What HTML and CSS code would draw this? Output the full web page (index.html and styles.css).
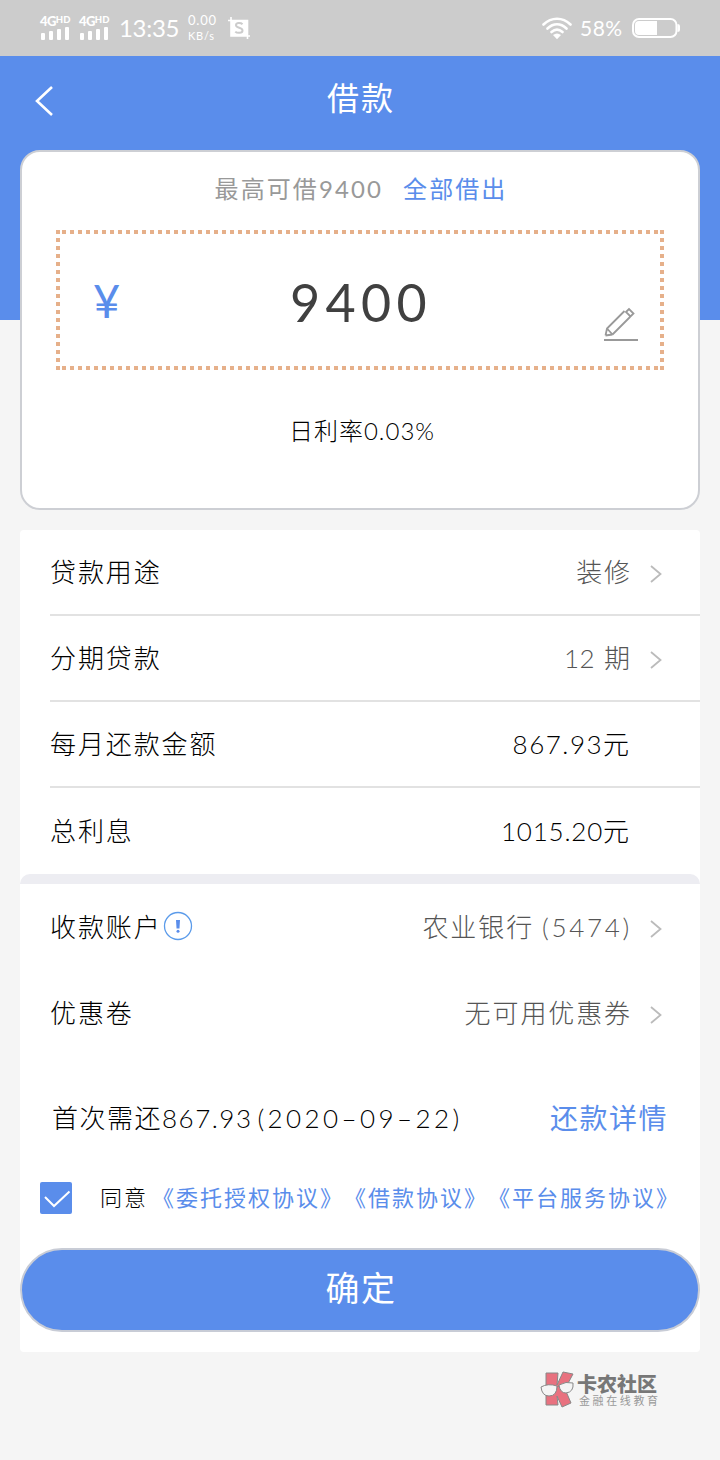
FILE: index.html
```html
<!DOCTYPE html>
<html lang="zh-CN">
<head>
    <meta charset="UTF-8">
    <meta name="viewport" content="width=device-width, initial-scale=1.0">
    <title>借款</title>
    <link rel="stylesheet" href="styles.css">
</head>
<body>
    <div class="status-bar">
        <div class="signal">
            <div class="net">4G<sup>HD</sup></div>
            <svg width="30" height="13" viewBox="0 0 30 13" fill="#fff">
                <rect x="1" y="6" width="4" height="7" rx="1"/><rect x="9" y="4" width="4" height="9" rx="1"/><rect x="17" y="2" width="4" height="11" rx="1"/><rect x="25" y="0" width="4" height="13" rx="1"/>
            </svg>
        </div>
        <div class="signal">
            <div class="net">4G<sup>HD</sup></div>
            <svg width="30" height="13" viewBox="0 0 30 13" fill="#fff">
                <rect x="1" y="6" width="4" height="7" rx="1"/><rect x="9" y="4" width="4" height="9" rx="1"/><rect x="17" y="2" width="4" height="11" rx="1"/><rect x="25" y="0" width="4" height="13" rx="1"/>
            </svg>
        </div>
        <div class="time">13:35</div>
        <div class="speed"><span>0.00</span><span class="unit">KB/s</span></div>
        <svg class="shot" width="22" height="22" viewBox="0 0 22 22">
            <path d="M0 3.5H19.5V22M3 0V19H22" fill="none" stroke="#fff" stroke-width="1.6"/>
            <path d="M3 3H19V19H3Z" fill="#fff"/>
            <path d="M14.5 7.2C13 5.7 8 5.3 8 8.2C8 11.4 14.5 10 14.5 13.4C14.5 16.5 9 16.4 7.3 14.6" fill="none" stroke="#ccc" stroke-width="2"/>
        </svg>
        <div class="status-right">
            <svg width="30" height="23" viewBox="0 0 30 23" fill="none" stroke="#fff" stroke-width="2.6" stroke-linecap="round">
                <path d="M1.5 7.5C9.5 -.2 20.5 -.2 28.5 7.5M5.5 11.5C11.5 6 18.5 6 24.5 11.5M9.5 15C13 12 17 12 20.5 15"/>
                <path d="M11 18Q15 14.8 19 18L15 22.3Z" fill="#fff" stroke="none"/>
            </svg>
            <span class="percent">58%</span>
            <svg width="48" height="20" viewBox="0 0 48 20">
                <rect x="1" y="1" width="43.5" height="18" rx="6" fill="none" stroke="#fff" stroke-width="2"/>
                <path d="M7 3H25V17H7Q3 17 3 13V7Q3 3 7 3Z" fill="#fff"/>
                <path d="M45.5 6Q48 6 48 8V12Q48 14 45.5 14Z" fill="#fff"/>
            </svg>
        </div>
    </div>

    <div class="header">
        <svg class="back" width="20" height="32" viewBox="0 0 20 32"><path d="M18 2L3 16L18 30" fill="none" stroke="#fff" stroke-width="2.6"/></svg>
        <h1>借款</h1>
    </div>

    <div class="container">
        <div class="amount-card">
            <div class="limit">
                <span>最高可借<span class="num">9400</span></span>
                <a class="all">全部借出</a>
            </div>
            <div class="amount-box">
                <span class="yen">¥</span>
                <span class="amount">9400</span>
                <svg class="edit" width="34" height="36" viewBox="0 0 34 36" fill="none" stroke="#999" stroke-width="1.8">
                    <path d="M1.5 28.5L3 21.5L20.5 4M8.5 27.5L26 10M1.5 28.5L8.5 27.5M3 21.5L8.5 27.5M22 5L25 2L29.5 6.5L26.5 9.5Z"/>
                    <path d="M0 33H34" stroke-width="2"/>
                </svg>
            </div>
            <div class="rate">日利率<span class="num">0.03%</span></div>
        </div>

        <div class="form">
            <div class="row line">
                <span>贷款用途</span>
                <span class="value">装修</span>
                <svg class="arrow" width="12" height="18" viewBox="0 0 12 18"><path d="M1 1L10.5 9L1 17"/></svg>
            </div>
            <div class="row line">
                <span>分期贷款</span>
                <span class="value"><span class="num term">12</span> 期</span>
                <svg class="arrow" width="12" height="18" viewBox="0 0 12 18"><path d="M1 1L10.5 9L1 17"/></svg>
            </div>
            <div class="row line">
                <span>每月还款金额</span>
                <span class="value dark"><span class="num monthly">867.93</span>元</span>
            </div>
            <div class="row">
                <span>总利息</span>
                <span class="value dark"><span class="num total">1015.20</span>元</span>
            </div>
            <div class="split"></div>
            <div class="row">
                <span>收款账户</span>
                <svg class="tip" width="30" height="30" viewBox="0 0 30 30">
                    <circle cx="15" cy="15" r="13.5" fill="none" stroke="#5b9bea" stroke-width="1.3"/>
                    <path d="M13 9H17L16.5 17.5H13.5Z" fill="#5a8deb"/>
                    <circle cx="15" cy="20.3" r="1.5" fill="#5a8deb"/>
                </svg>
                <span class="value">农业银行<span class="num bank">(5474)</span></span>
                <svg class="arrow" width="12" height="18" viewBox="0 0 12 18"><path d="M1 1L10.5 9L1 17"/></svg>
            </div>
            <div class="row">
                <span>优惠卷</span>
                <span class="value">无可用优惠券</span>
                <svg class="arrow" width="12" height="18" viewBox="0 0 12 18"><path d="M1 1L10.5 9L1 17"/></svg>
            </div>
            <div class="first-pay">
                <span>首次需还<span class="num">867.93</span><span class="num date">(2020–09–22)</span></span>
                <a>还款详情</a>
            </div>
            <div class="agree">
                <svg width="32" height="32" viewBox="0 0 32 32">
                    <rect width="32" height="32" rx="2" fill="#5a8deb"/>
                    <path d="M5 15L14 24L29.5 9.5" fill="none" stroke="#fff" stroke-width="2"/>
                </svg>
                <span class="agree-text">同意</span>
                <span class="links"><a>《委托授权协议》</a><a>《借款协议》</a><a>《平台服务协议》</a></span>
            </div>
            <button class="submit">确定</button>
        </div>
    </div>

    <div class="footer">
        <svg width="36" height="38" viewBox="0 0 36 38" stroke="#888" stroke-width="1">
            <path d="M6 2H18L17 14L23 1L33 3L25 18L31 32L22 36L17 25L18 34H6Z" fill="#e8717f"/>
            <path d="M1 16Q8 12 17 15Q17 25 9 25Q2 25 1 16ZM19 14Q26 10 33 12Q34 21 26 22Q20 22 19 14Z" fill="#f5f5f5"/>
            <path d="M17 16L19 15" fill="none"/>
        </svg>
        <div class="brand">
            <div class="brand-name">卡农社区</div>
            <div class="brand-sub">金融在线教育</div>
        </div>
    </div>
</body>
</html>
```
FILE: styles.css
```css
* {
    margin: 0;
    padding: 0;
    box-sizing: border-box;
}

body {
    background: #f5f5f5;
    color: #000;
    font-family: Lato, "Noto Sans CJK SC", sans-serif;
    font-size: 26px;
    letter-spacing: 1.9px;
    font-weight: 300;
    text-spacing-trim: space-all;
    height: 1460px;
    overflow: hidden;
}

svg {
    display: block;
    flex: none;
}

.status-bar {
    display: flex;
    align-items: center;
    height: 56px;
    padding: 0 40px;
    background: #ccc;
    color: #fff;
    font-weight: 400;
    white-space: nowrap;
}

.signal {
    width: 30px;
    margin-right: 9px;
}

.net {
    font-size: 13px;
    font-weight: 900;
    line-height: 11px;
    letter-spacing: -0.6px;
}

.net sup {
    font-size: 9.5px;
    line-height: 0;
    letter-spacing: 0.1px;
    vertical-align: 3px;
}

.time {
    width: 62px;
    padding-bottom: 2px;
    font-size: 24px;
    letter-spacing: -0.3px;
    margin-left: 1px;
}

.speed {
    display: flex;
    flex-direction: column;
    width: 34px;
    margin-left: 7px;
    font-size: 13px;
    line-height: 15px;
    letter-spacing: 0.8px;
}

.unit {
    font-size: 11px;
}

.shot {
    margin-left: 6px;
}

.status-right {
    display: flex;
    align-items: center;
    margin-left: auto;
}

.percent {
    width: 52px;
    padding: 0 0 2px 8px;
    margin-right: 8px;
    font-size: 21px;
    letter-spacing: 0.5px;
}

.header {
    display: flex;
    height: 264px;
    padding: 28px 34px;
    background: #5a8deb;
}

.back {
    margin-top: 1px;
}

h1 {
    flex: 1;
    margin-right: 20px;
    padding-left: 2px;
    color: #fff;
    font-size: 32px;
    font-weight: 400;
    line-height: 28px;
    text-align: center;
}

.container {
    margin: -170px 20px 0;
}

.amount-card {
    height: 360px;
    padding: 24px 34px;
    background: #fff;
    border: 2px solid #cdcfd4;
    border-radius: 20px;
}

.limit {
    display: flex;
    justify-content: center;
    gap: 20px;
    height: 30px;
    padding-left: 2px;
    line-height: 26px;
    font-size: 24px;
    font-weight: 400;
    letter-spacing: 2.1px;
    color: #999;
}

a {
    color: #5a8deb;
    font-weight: 400;
}

/* square dots, 4px wide with a 4px gap */
.amount-box {
    --dot: #e6b08a;
    display: grid;
    grid-template-columns: 1fr auto 1fr;
    align-items: center;
    height: 140px;
    margin-top: 24px;
    padding: 0 26px 0 36px;
    background:
        linear-gradient(90deg, var(--dot) 50%, transparent 50%) 6px 0 / 8px 4px repeat-x,
        linear-gradient(90deg, var(--dot) 50%, transparent 50%) 6px 100% / 8px 4px repeat-x,
        linear-gradient(var(--dot) 50%, transparent 50%) 0 0 / 4px 8px repeat-y,
        linear-gradient(var(--dot) 50%, transparent 50%) 100% 0 / 4px 8px repeat-y;
}

.yen {
    padding-left: 1px;
    color: #5a8deb;
    font-size: 47px;
    font-weight: 400;
}

.amount {
    color: #404040;
    font-size: 52px;
    font-weight: 400;
    line-height: 60px;
    letter-spacing: 5.4px;
    padding-top: 4px;
    margin: 0 4px 0 -4px;
}

.edit {
    justify-self: end;
    margin-top: 49px;
}

.rate {
    margin-top: 46px;
    padding-left: 4px;
    line-height: 30px;
    font-size: 24px;
    letter-spacing: 1px;
    text-align: center;
}

.form {
    height: 822px;
    margin-top: 20px;
    background: #fff;
    border-radius: 4px;
}

.row {
    display: flex;
    align-items: center;
    height: 86px;
    margin-left: 30px;
    padding: 0 38px 3px 0;
}

.line {
    border-bottom: 2px solid #e2e2e2;
}

.value {
    margin-left: auto;
    color: #555;
}

.dark {
    color: #000;
    margin-right: 31px;
}

.num {
    font-variant-numeric: tabular-nums;
}

.term {
    letter-spacing: 0.5px;
}

.monthly {
    letter-spacing: 1.5px;
}

.total {
    letter-spacing: 0.8px;
}

.bank {
    margin-left: 8px;
    letter-spacing: 2.7px;
}

.arrow {
    margin: 6px 0 0 18px;
    fill: none;
    stroke: #bbb;
    stroke-width: 1.8;
}

.tip {
    margin-left: 1px;
}

.split {
    height: 10px;
    background: #ededf2;
    border-radius: 10px 10px 0 0;
}

.first-pay {
    display: flex;
    justify-content: space-between;
    align-items: center;
    height: 124px;
    padding: 0 32px 3px;
    letter-spacing: 1.5px;
}

.first-pay a {
    font-size: 28px;
}

.date {
    margin-left: 5px;
    letter-spacing: 3.4px;
}

.agree {
    display: flex;
    align-items: center;
    height: 36px;
    padding-left: 20px;
    font-size: 22px;
    letter-spacing: 2px;
    white-space: nowrap;
}

.agree-text {
    margin-left: 28px;
    padding-bottom: 4px;
}

.links {
    margin-left: 4px;
    padding-bottom: 4px;
}

.submit {
    display: block;
    width: 100%;
    height: 84px;
    margin-top: 32px;
    padding: 0 0 8px 2px;
    background: #5a8deb;
    border: 2px solid #c8ccd6;
    border-radius: 42px;
    color: #fff;
    font: 400 34px Lato, "Noto Sans CJK SC", sans-serif;
    letter-spacing: 1.5px;
}

.footer {
    display: flex;
    margin: 19px 0 0 540px;
}

.brand {
    margin-left: 1px;
    white-space: nowrap;
}

.brand-name {
    color: #777;
    font-size: 20px;
    font-weight: 900;
    line-height: 26px;
    letter-spacing: 0;
}

.brand-sub {
    padding-left: 2px;
    color: #999;
    font-size: 11px;
    font-weight: 400;
    line-height: 8px;
    letter-spacing: 2.6px;
}
```
